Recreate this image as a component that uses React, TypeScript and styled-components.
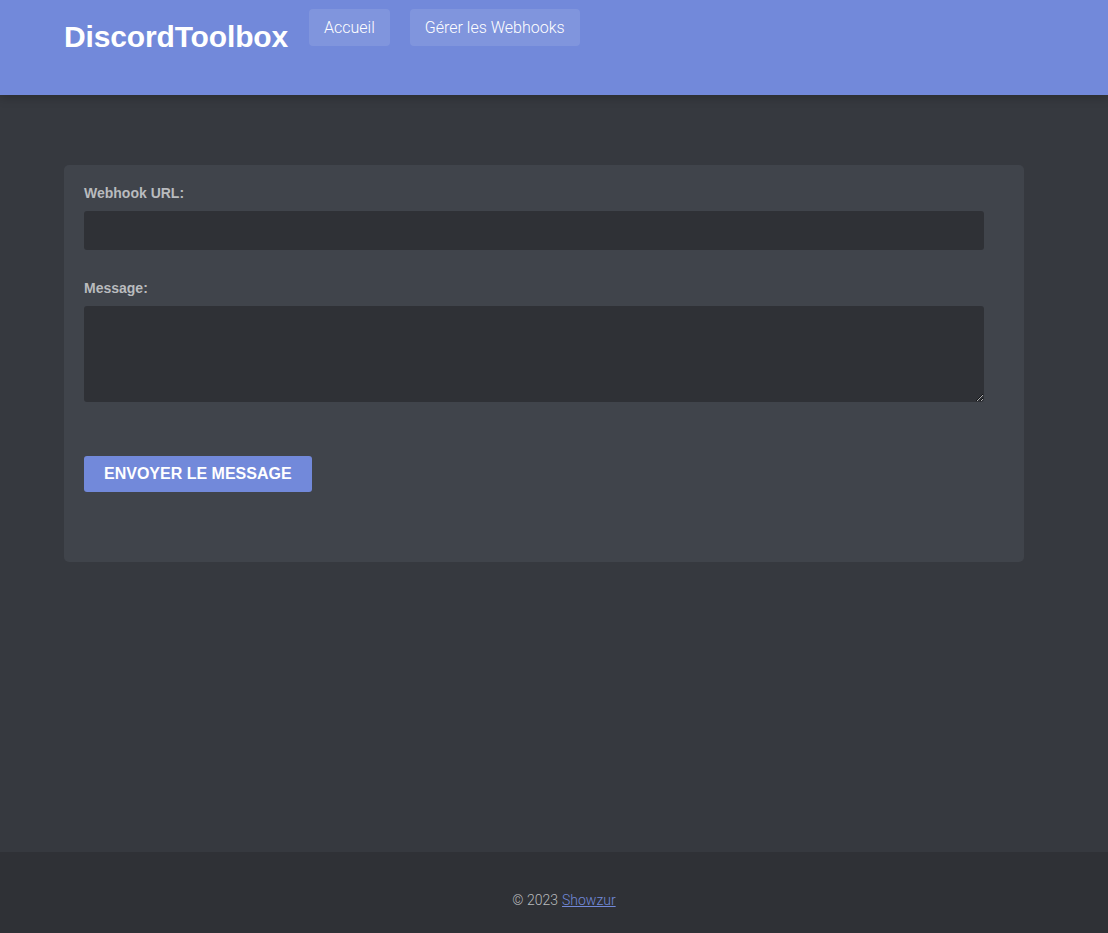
import React from "react";
import styled, { createGlobalStyle } from "styled-components";

const Global = createGlobalStyle`
  html, body { margin: 0; padding: 0; }
  body {
    background: #36393f;
    font-family: Roboto, "Liberation Sans", Arial, sans-serif;
    color: #dcddde;
  }
  * { box-sizing: border-box; }
`;

const Page = styled.div`
  min-height: 100vh;
  display: flex;
  flex-direction: column;
`;

const Header = styled.header`
  height: 95px;
  background: #7289da;
  padding: 9px 64px 0;
  display: flex;
  align-items: flex-start;
  gap: 21px;
  box-shadow: 0 2px 10px rgba(0, 0, 0, 0.25);
  position: relative;
  z-index: 1;
`;

const Title = styled.h1`
  margin: 11px 0 0;
  font-family: "Liberation Sans", Arial, sans-serif;
  font-weight: 700;
  font-size: 30px;
  letter-spacing: -0.15px;
  line-height: 34px;
  color: #ffffff;
`;

const Nav = styled.nav`
  display: flex;
  gap: 20px;
`;

const NavLink = styled.a`
  display: block;
  padding: 9px 15px;
  line-height: 19px;
  font-size: 16px;
  font-weight: 300;
  color: #ffffff;
  text-decoration: none;
  background: rgba(255, 255, 255, 0.1);
  border-radius: 4px;
`;

const Main = styled.main`
  flex: 1;
  padding: 70px 64px 40px;
`;

const Card = styled.section`
  width: 960px;
  background: #40444b;
  border-radius: 5px;
  padding: 20px 20px 70px;
`;

const Group = styled.div`
  display: flex;
  flex-direction: column;
  margin-bottom: 30px;
`;

const Label = styled.label`
  font-family: "Liberation Sans", Arial, sans-serif;
  font-weight: 700;
  font-size: 14px;
  line-height: 16px;
  color: #b9bbbe;
  margin-bottom: 10px;
`;

const Input = styled.input`
  width: 900px;
  height: 39px;
  border: none;
  border-radius: 3px;
  background: #2f3136;
  color: #dcddde;
  padding: 0 10px;
  outline: none;
`;

const TextArea = styled.textarea`
  display: block;
  width: 900px;
  height: 96px;
  border: none;
  border-radius: 3px;
  background: #2f3136;
  color: #dcddde;
  padding: 10px;
  outline: none;
`;

const Button = styled.button`
  display: block;
  margin-top: 54px;
  height: 36px;
  padding: 0 20px;
  border: none;
  border-radius: 3px;
  background: #7289da;
  color: #ffffff;
  font-family: "Liberation Sans", Arial, sans-serif;
  font-weight: 700;
  font-size: 16px;
  cursor: pointer;
`;

const Footer = styled.footer`
  height: 81px;
  background: #2f3136;
  display: flex;
  align-items: center;
  justify-content: center;
  padding: 15px 0 0 20px;
  font-size: 14px;
  font-weight: 300;
  color: #b9bbbe;
`;

const FooterLink = styled.a`
  color: #7289da;
  text-decoration: underline;
  margin-left: 4px;
`;

export default function App() {
  return (
    <Page>
      <Global />
      <Header>
        <Title>DiscordToolbox</Title>
        <Nav>
          <NavLink href="#">Accueil</NavLink>
          <NavLink href="#">Gérer les Webhooks</NavLink>
        </Nav>
      </Header>
      <Main>
        <Card>
          <Group>
            <Label htmlFor="url">Webhook URL:</Label>
            <Input id="url" type="text" />
          </Group>
          <Group>
            <Label htmlFor="msg">Message:</Label>
            <TextArea id="msg" />
          </Group>
          <Button>ENVOYER LE MESSAGE</Button>
        </Card>
      </Main>
      <Footer>
        © 2023<FooterLink href="#">Showzur</FooterLink>
      </Footer>
    </Page>
  );
}
